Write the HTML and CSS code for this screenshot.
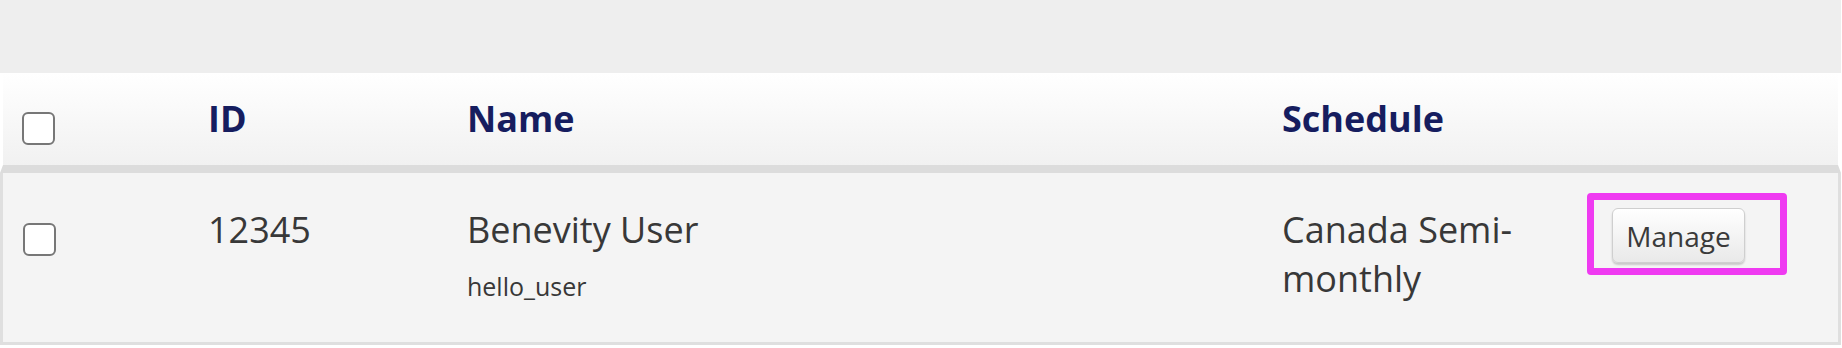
FILE: index.html
```html
<!DOCTYPE html>
<html lang="en">
<head>
<meta charset="utf-8">
<title>Users</title>
<link rel="stylesheet" href="styles.css">
</head>
<body>
<div class="toolbar"></div>
<div class="table">
  <div class="grid head">
    <div class="cell cb-cell"><span class="checkbox"></span></div>
    <div class="cell th">ID</div>
    <div class="cell th">Name</div>
    <div class="cell th">Schedule</div>
    <div class="cell"></div>
  </div>
  <div class="grid row">
    <div class="cell cb-cell"><span class="checkbox"></span></div>
    <div class="cell td">12345</div>
    <div class="cell td">
      <div>Benevity User</div>
      <div class="sub">hello_user</div>
    </div>
    <div class="cell td sched">Canada Semi-monthly</div>
    <div class="cell act">
      <span class="highlight"><button class="btn" type="button">Manage</button></span>
    </div>
  </div>
</div>
</body>
</html>
```
FILE: styles.css
```css
html, body {
  margin: 0;
  padding: 0;
  background: #ffffff;
}
body {
  font-family: "Open Sans", "Liberation Sans", sans-serif;
  color: #383838;
  width: 1842px;
}
.toolbar {
  height: 73px;
  background: #eeeeee;
  margin-right: 1px;
}
.grid {
  display: grid;
  grid-template-columns: 205px 259px 815px 304px 1fr;
  align-items: start;
  box-sizing: border-box;
  width: 1841px;
}
.head {
  height: 100px;
  border-left: 3px solid transparent;
  border-right: 3px solid transparent;
  border-bottom: 8px solid #dcdcdc;
  background: linear-gradient(#ffffff, #f1f1f1);
  background-clip: padding-box;
}
.head .cb-cell {
  padding-top: 39px;
  padding-left: 19px;
}
.th {
  padding-top: 21px;
  font-size: 36px;
  line-height: 49px;
  font-weight: 700;
  color: #161d5f;
}
.row {
  height: 172px;
  background: #f4f4f4;
  border-left: 3px solid #dfdfdf;
  border-right: 3px solid #dfdfdf;
  border-bottom: 3px solid #dfdfdf;
}
.row .cb-cell {
  padding-top: 50px;
  padding-left: 20px;
}
.checkbox {
  display: block;
  width: 33px;
  height: 33px;
  box-sizing: border-box;
  border: 2px solid #777777;
  border-radius: 6px;
  background: #ffffff;
}
.td {
  padding-top: 32px;
  font-size: 36px;
  line-height: 49px;
}
.sub {
  margin-top: 15px;
  font-size: 25px;
  line-height: 34px;
}
.sched {
  padding-right: 20px;
}
.act {
  padding-top: 20px;
  padding-left: 1px;
}
.highlight {
  display: inline-block;
  border: 7px solid #ef3af1;
  border-radius: 4px;
  padding: 8px 35px 5px 18px;
}
.btn {
  display: block;
  width: 133px;
  height: 55px;
  padding: 0;
  box-sizing: border-box;
  font-family: "Open Sans", "Liberation Sans", sans-serif;
  font-size: 28px;
  color: #3a3a3a;
  background: linear-gradient(#ffffff, #e9e9e9);
  border: 1px solid #cfcfcf;
  border-radius: 6px;
  box-shadow: 0 2px 2px rgba(0, 0, 0, 0.18);
}
```
